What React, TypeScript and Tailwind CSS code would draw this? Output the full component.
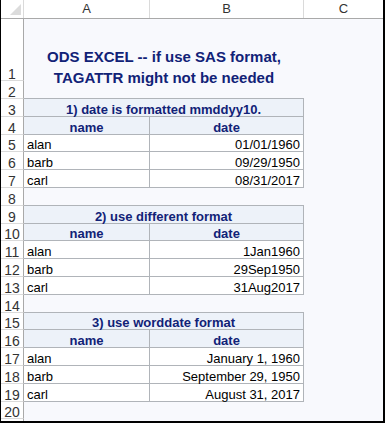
type Row =
  | { n: number; kind: "blank" | "edge" }
  | { n: number; kind: "section"; text: string }
  | { n: number; kind: "head" }
  | { n: number; kind: "data"; name: string; date: string }

const rows: Row[] = [
  { n: 2, kind: "edge" },
  { n: 3, kind: "section", text: "1) date is formatted mmddyy10." },
  { n: 4, kind: "head" },
  { n: 5, kind: "data", name: "alan", date: "01/01/1960" },
  { n: 6, kind: "data", name: "barb", date: "09/29/1950" },
  { n: 7, kind: "data", name: "carl", date: "08/31/2017" },
  { n: 8, kind: "edge" },
  { n: 9, kind: "section", text: "2) use different format" },
  { n: 10, kind: "head" },
  { n: 11, kind: "data", name: "alan", date: "1Jan1960" },
  { n: 12, kind: "data", name: "barb", date: "29Sep1950" },
  { n: 13, kind: "data", name: "carl", date: "31Aug2017" },
  { n: 14, kind: "edge" },
  { n: 15, kind: "section", text: "3) use worddate format" },
  { n: 16, kind: "head" },
  { n: 17, kind: "data", name: "alan", date: "January 1, 1960" },
  { n: 18, kind: "data", name: "barb", date: "September 29, 1950" },
  { n: 19, kind: "data", name: "carl", date: "August 31, 2017" },
  { n: 20, kind: "blank" },
]

function RowHead({ n }: { n?: number }) {
  return (
    <div className="w-[23px] shrink-0 bg-white border-r border-b border-r-[#a9a9a9] border-b-[#dadada] flex items-end justify-center text-[14px] leading-[12px] text-[#333]">
      {n}
    </div>
  )
}

function SheetRow({ row }: { row: Row }) {
  const short = row.n === 5 || row.n === 10 || row.n === 15 || row.n === 20
  return (
    <div className={"flex " + (short ? "h-[17px]" : "h-[18px]")}>
      <RowHead n={row.n} />

      {row.kind === "edge" && (
        <div className="w-[280px] border-b border-[#b0b4b9]" />
      )}

      {row.kind === "section" && (
        <div className="w-[280px] bg-[#edf2f9] border-r border-b border-[#b0b4b9] flex items-end justify-center text-[13px] leading-[13px] font-bold text-[#112277]">
          {row.text}
        </div>
      )}

      {row.kind === "head" && (
        <>
          <div className="w-[126px] bg-[#edf2f9] border-r border-b border-[#b0b4b9] flex items-end justify-center text-[13px] leading-[13px] font-bold text-[#112277]">
            name
          </div>
          <div className="w-[154px] bg-[#edf2f9] border-r border-b border-[#b0b4b9] flex items-end justify-center text-[13px] leading-[13px] font-bold text-[#112277]">
            date
          </div>
        </>
      )}

      {row.kind === "data" && (
        <>
          <div className="w-[126px] bg-white border-r border-b border-[#b0b4b9] flex items-end pl-[3px] text-[13px] leading-[13px] text-black">
            {row.name}
          </div>
          <div className="w-[154px] bg-white border-r border-b border-[#b0b4b9] flex items-end justify-end pr-[3px] text-[13px] leading-[13px] text-black">
            {row.date}
          </div>
        </>
      )}
    </div>
  )
}

export default function App() {
  return (
    <div className="w-[385px] h-[423px] overflow-hidden bg-[#f8f9fd] border-l border-r-2 border-b-2 border-black font-['Liberation_Sans',Arial,sans-serif]">

      {/* column letters */}
      <div className="flex h-[19px] bg-white border-b border-[#a9a9a9]">
        <div className="w-[23px] shrink-0 border-r border-[#dadada]">
          <svg width="22" height="18" viewBox="0 0 22 18">
            <polygon points="20,4 20,15 9,15" fill="#dcdcdc" />
          </svg>
        </div>
        <div className="w-[126px] border-r border-[#dadada] flex items-center justify-center text-[13px] text-[#333]">
          A
        </div>
        <div className="w-[154px] border-r border-[#dadada] flex items-center justify-center text-[13px] text-[#333]">
          B
        </div>
        <div className="flex-1 flex items-center justify-center text-[13px] text-[#333]">
          C
        </div>
      </div>

      {/* title row */}
      <div className="flex h-[62px]">
        <RowHead n={1} />
        <div className="w-[280px] pt-[27px] text-center text-[15px] leading-[21px] font-bold text-[#112277] whitespace-nowrap">
          ODS EXCEL -- if use SAS format,
          <br />
          TAGATTR might not be needed
        </div>
      </div>

      {rows.map((r) => (
        <SheetRow key={r.n} row={r} />
      ))}

      {/* partly hidden row 21 */}
      <div className="flex h-[18px]">
        <RowHead />
      </div>

    </div>
  )
}
